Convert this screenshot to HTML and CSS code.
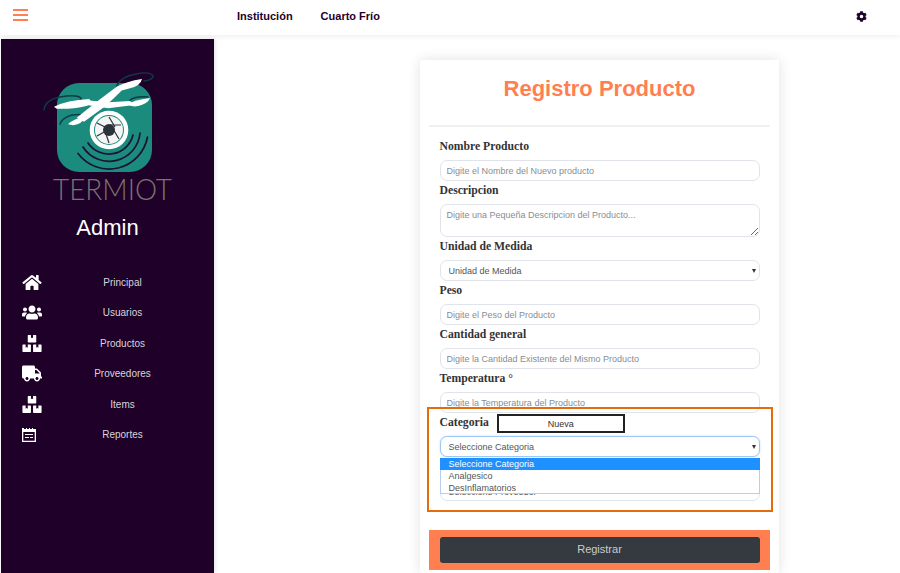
FILE: index.html
```html
<!DOCTYPE html>
<html lang="es">

<head>
    <meta charset="UTF-8">
    <meta name="viewport" content="width=device-width, initial-scale=1.0">
    <title>Registro Producto</title>
    <link rel="stylesheet" href="styles.css">
</head>

<body>
    <header class="topbar">
        <svg class="topbar-menu" viewBox="0 0 15 12">
            <path d="M0 1h15M0 6h15M0 11h15" />
        </svg>
        <nav class="topbar-links">
            <a href="#">Institución</a>
            <a href="#">Cuarto Frío</a>
        </nav>
        <svg class="topbar-cog" viewBox="0 0 512 512">
            <path d="M487.4 315.7l-42.6-24.6c4.3-23.2 4.3-47 0-70.2l42.6-24.6c4.9-2.8 7.1-8.6 5.5-14-11.1-35.6-30-67.8-54.7-94.6-3.8-4.1-10-5.1-14.8-2.3L380.8 110c-17.9-15.4-38.5-27.3-60.8-35.1V25.8c0-5.6-3.9-10.5-9.4-11.7-36.7-8.2-74.3-7.8-109.2 0-5.5 1.2-9.4 6.1-9.4 11.7V75c-22.2 7.9-42.8 19.8-60.8 35.1L88.7 85.5c-4.9-2.8-11-1.9-14.8 2.3-24.7 26.7-43.6 58.9-54.7 94.6-1.7 5.4.6 11.2 5.5 14L67.3 221c-4.3 23.2-4.3 47 0 70.2l-42.6 24.6c-4.9 2.8-7.1 8.6-5.5 14 11.1 35.6 30 67.8 54.7 94.6 3.8 4.1 10 5.1 14.8 2.3l42.6-24.6c17.9 15.4 38.5 27.3 60.8 35.1v49.2c0 5.6 3.9 10.5 9.4 11.7 36.7 8.2 74.3 7.8 109.2 0 5.5-1.2 9.4-6.1 9.4-11.7v-49.2c22.2-7.9 42.8-19.8 60.8-35.1l42.6 24.6c4.9 2.8 11 1.9 14.8-2.3 24.7-26.7 43.6-58.9 54.7-94.6 1.5-5.5-.7-11.3-5.6-14.1zM256 336c-44.1 0-80-35.9-80-80s35.9-80 80-80 80 35.9 80 80-35.9 80-80 80z" />
        </svg>
    </header>

    <div class="layout">
        <aside class="sidebar">
            <svg class="logo" viewBox="0 0 140 150">
                <rect x="17" y="18" width="95" height="89" rx="22" fill="#1b8b7e" />
                <!-- helices -->
                <g fill="none" stroke="#0f3a44" stroke-width="1.500" stroke-linecap="round">
                    <path d="M76 23Q79 12 96 9Q110 6 113 11Q113 15 104 16" />
                    <path d="M4 45Q5 35 20 32Q36 29 41 33Q41 36 36 37" />
                    <path d="M20 59Q22 53 32 50Q40 49 44 50" />
                    <path d="M90 35Q96 31 108 32" />
                </g>
                <g transform="scale(.3333)" fill="#fff">
                    <path d="M42 125Q80 106 148 102Q158 112 142 122Q90 134 50 131Z" />
                    <path d="M140 106L205 112L270 108L282 120L205 130L140 120Z" />
                    <path d="M262 118Q290 103 330 99Q324 116 295 123Q275 127 262 118Z" />
                    <path d="M226 68Q260 48 306 42Q302 62 270 70L248 76Z" />
                    <path d="M250 72L198 122L132 170L110 158L178 104L232 64Z" />
                    <path d="M84 178Q100 160 137 155Q126 177 100 181Z" />
                </g>
                <!-- lente -->
                <circle cx="69" cy="65" r="19.300" fill="#fff" />
                <circle cx="69" cy="65" r="15" fill="#1b8b7e" />
                <circle cx="69" cy="65" r="14" fill="#f4f4f4" />
                <path d="M69 52L75 62M81 60L70 60M79 74L73 64M69 78L65 66M57 71L66 66M57 58L65 62" stroke="#2a333c" stroke-width="1.200" />
                <circle cx="69" cy="65" r="6" fill="#2a333c" />
                <g fill="none" stroke="#1c1236" stroke-width="1.700" stroke-linecap="round">
                    <path d="M48 78A25 25 0 0 0 93 70" />
                    <path d="M43 82A31 31 0 0 0 100 68" />
                    <path d="M38 88.500A39 39 0 0 0 107.500 72" />
                </g>
                <text class="logo-text" x="13" y="135" textLength="119" lengthAdjust="spacingAndGlyphs">TERMIOT</text>
            </svg>
            <h2 class="sidebar-user">Admin</h2>
            <ul class="sidebar-nav">
                <li>
                    <svg viewBox="0 0 576 512"><path d="M280.37 148.26L96 300.11V464a16 16 0 0 0 16 16l112.06-.29a16 16 0 0 0 15.92-16V368a16 16 0 0 1 16-16h64a16 16 0 0 1 16 16v95.64a16 16 0 0 0 16 16.05L464 480a16 16 0 0 0 16-16V300L295.67 148.26a12.19 12.19 0 0 0-15.3 0zM571.6 251.47L488 182.56V44.05a12 12 0 0 0-12-12h-56a12 12 0 0 0-12 12v72.61L318.47 43a48 48 0 0 0-61 0L4.34 251.47a12 12 0 0 0-1.6 16.9l25.5 31A12 12 0 0 0 45.15 301l235.22-193.74a12.19 12.19 0 0 1 15.3 0L530.9 301a12 12 0 0 0 16.9-1.6l25.5-31a12 12 0 0 0-1.7-16.93z" /></svg>
                    <a href="#">Principal</a>
                </li>
                <li>
                    <svg viewBox="0 0 640 512"><path d="M96 224c35.3 0 64-28.7 64-64s-28.7-64-64-64-64 28.7-64 64 28.7 64 64 64zm448 0c35.3 0 64-28.7 64-64s-28.7-64-64-64-64 28.7-64 64 28.7 64 64 64zm32 32h-64c-17.6 0-33.5 7.1-45.1 18.6 40.3 22.1 68.9 62 75.1 109.4h66c17.7 0 32-14.3 32-32v-32c0-35.3-28.7-64-64-64zm-256 0c61.9 0 112-50.1 112-112S381.9 32 320 32 208 82.1 208 144s50.1 112 112 112zm76.8 32h-8.3c-20.8 10-43.9 16-68.5 16s-47.6-6-68.5-16h-8.3C179.6 288 128 339.6 128 403.2V432c0 26.5 21.5 48 48 48h288c26.5 0 48-21.5 48-48v-28.8c0-63.6-51.6-115.2-115.2-115.2zm-223.7-13.4C161.5 263.1 145.6 256 128 256H64c-35.3 0-64 28.7-64 64v32c0 17.7 14.3 32 32 32h65.9c6.3-47.4 34.9-87.3 75.2-109.4z" /></svg>
                    <a href="#">Usuarios</a>
                </li>
                <li>
                    <svg viewBox="0 0 576 512"><path d="M560 288h-80v96l-32-21.3-32 21.3v-96h-80c-8.8 0-16 7.2-16 16v192c0 8.8 7.2 16 16 16h224c8.8 0 16-7.2 16-16V304c0-8.8-7.2-16-16-16zm-384-64h224c8.8 0 16-7.2 16-16V16c0-8.8-7.2-16-16-16h-80v96l-32-21.3L256 96V0h-80c-8.8 0-16 7.2-16 16v192c0 8.8 7.2 16 16 16zm64 64h-80v96l-32-21.3L96 384v-96H16c-8.8 0-16 7.2-16 16v192c0 8.8 7.2 16 16 16h224c8.8 0 16-7.2 16-16V304c0-8.8-7.2-16-16-16z" /></svg>
                    <a href="#">Productos</a>
                </li>
                <li>
                    <svg viewBox="0 0 640 512"><path d="M624 352h-16V243.900c0-12.700-5.100-24.900-14.100-33.900L494 110.100c-9-9-21.200-14.100-33.900-14.100H416V48c0-26.500-21.500-48-48-48H48C21.500 0 0 21.500 0 48v320c0 26.500 21.500 48 48 48h16c0 53 43 96 96 96s96-43 96-96h128c0 53 43 96 96 96s96-43 96-96h48c8.800 0 16-7.200 16-16v-32c0-8.800-7.200-16-16-16zM160 464c-26.500 0-48-21.500-48-48s21.500-48 48-48 48 21.500 48 48-21.500 48-48 48zm320 0c-26.500 0-48-21.500-48-48s21.500-48 48-48 48 21.500 48 48-21.500 48-48 48zm80-208H416V144h44.100l99.900 99.900V256z" /></svg>
                    <a href="#">Proveedores</a>
                </li>
                <li>
                    <svg viewBox="0 0 576 512"><path d="M560 288h-80v96l-32-21.3-32 21.3v-96h-80c-8.8 0-16 7.2-16 16v192c0 8.8 7.2 16 16 16h224c8.8 0 16-7.2 16-16V304c0-8.8-7.2-16-16-16zm-384-64h224c8.8 0 16-7.2 16-16V16c0-8.8-7.2-16-16-16h-80v96l-32-21.3L256 96V0h-80c-8.8 0-16 7.2-16 16v192c0 8.8 7.2 16 16 16zm64 64h-80v96l-32-21.3L96 384v-96H16c-8.8 0-16 7.2-16 16v192c0 8.8 7.2 16 16 16h224c8.8 0 16-7.2 16-16V304c0-8.8-7.2-16-16-16z" /></svg>
                    <a href="#">Items</a>
                </li>
                <li>
                    <svg class="nav-report" viewBox="0 0 14 14" preserveAspectRatio="xMinYMid"><path fill-rule="evenodd" d="M0 0h2v1h2V0h1v1h2V0h1v1h2V0h1v1h3v13H0zM1.300 4v8.700h11.400V4zM3 6h8v1H3zM8 9h3v1H8zM3 9h4v1H3z" /></svg>
                    <a href="#">Reportes</a>
                </li>
            </ul>
        </aside>

        <main class="main">
            <section class="card">
                <h1 class="card-title">Registro Producto</h1>
                <form class="form">
                    <label class="form-label">Nombre Producto</label>
                    <input class="form-input" type="text" placeholder="Digite el Nombre del Nuevo producto">
                    <label class="form-label">Descripcion</label>
                    <textarea class="form-input form-area" placeholder="Digite una Pequeña Descripcion del Producto..."></textarea>
                    <label class="form-label">Unidad de Medida</label>
                    <div class="select-wrap">
                        <select class="form-input form-select">
                            <option>Unidad de Medida</option>
                        </select>
                    </div>
                    <label class="form-label">Peso</label>
                    <input class="form-input" type="text" placeholder="Digite el Peso del Producto">
                    <label class="form-label">Cantidad general</label>
                    <input class="form-input" type="text" placeholder="Digite la Cantidad Existente del Mismo Producto">
                    <label class="form-label">Temperatura °</label>
                    <input class="form-input" type="text" placeholder="Digite la Temperatura del Producto">
                    <div class="form-label form-label-row">
                        <label>Categoria</label>
                        <button class="btn-new" type="button">Nueva</button>
                    </div>
                    <div class="select-wrap">
                        <select class="form-input form-select is-focus">
                            <option>Seleccione Categoria</option>
                        </select>
                        <ul class="select-list">
                            <li class="current">Seleccione Categoria</li>
                            <li>Analgesico</li>
                            <li>DesInflamatorios</li>
                        </ul>
                    </div>
                    <div class="form-label"></div>
                    <select class="form-input form-select form-select-low">
                        <option>Seleccione Proveedor</option>
                    </select>
                    <div class="form-submit">
                        <button class="btn-submit" type="button">Registrar</button>
                    </div>
                </form>
                <div class="mark"></div>
            </section>
        </main>
    </div>
</body>

</html>
```

FILE: styles.css
```css
* {
    margin: 0;
    padding: 0;
    box-sizing: border-box;
}

html,
body {
    height: 573px;
    overflow: hidden;
}

body {
    background-color: #fff;
    font-family: "Liberation Sans", Arial, sans-serif;
}

ul {
    list-style: none;
}

a {
    color: inherit;
    text-decoration: none;
}

/* barra superior */
.topbar {
    height: 35px;
    display: flex;
    align-items: flex-start;
    background-color: #fff;
    box-shadow: 0 1px 6px rgba(0, 0, 0, 0.08);
}

.topbar-menu {
    width: 15px;
    height: 12px;
    margin: 9px 0 0 13px;
    fill: none;
    stroke: #ff7f50;
    stroke-width: 2;
}

.topbar-links {
    display: flex;
    gap: 28px;
    margin: 9px 0 0 209px;
    font-size: 11px;
    font-weight: bold;
    line-height: 14px;
    color: #1e0029;
}

.topbar-cog {
    width: 11px;
    height: 11px;
    margin: 11px 33px 0 auto;
    fill: #1e0029;
}

.layout {
    display: flex;
    align-items: flex-start;
}

/* menu lateral */
.sidebar {
    width: 213px;
    height: 534px;
    margin: 4px 0 0 1px;
    padding-top: 26px;
    flex-shrink: 0;
    background-color: #1e0029;
    box-shadow: 1px 0 4px rgba(0, 0, 0, 0.12);
}

.logo {
    display: block;
    width: 140px;
    height: 150px;
    margin-left: 39px;
}

.logo-text {
    font-family: "Lato", sans-serif;
    font-size: 30px;
    font-weight: 300;
    fill: #7a736e;
}

.sidebar-user {
    font-size: 22px;
    font-weight: normal;
    line-height: 26px;
    text-align: center;
    color: #fff;
}

.sidebar-nav {
    margin-top: 26px;
}

.sidebar-nav li {
    height: 30.500px;
    display: flex;
    align-items: center;
    font-size: 10px;
    color: #d8d5da;
}

.sidebar-nav svg {
    width: 20px;
    height: 17px;
    margin-left: 21px;
    flex-shrink: 0;
    fill: #fff;
}

.sidebar-nav .nav-report {
    height: 14px;
}

.sidebar-nav a {
    flex: 1;
    margin-right: 11px;
    text-align: center;
}

/* formulario */
.main {
    flex: 1;
    padding: 25px 0 0 206px;
}

.card {
    width: 359px;
    height: 513px;
    position: relative;
    padding: 0 9px;
    background-color: #fff;
    box-shadow: 0 0 12px rgba(0, 0, 0, 0.12);
}

.card-title {
    height: 67px;
    padding-top: 14px;
    border-bottom: 2px solid #eef0f2;
    font-size: 22px;
    line-height: 30px;
    text-align: center;
    color: #ff7f50;
}

.form {
    display: flex;
    flex-direction: column;
    padding: 10px 10.500px 0;
}

.form-label {
    height: 23px;
    font-family: "Liberation Serif", serif;
    font-size: 11.700px;
    font-weight: bold;
    line-height: 20px;
    color: #333;
}

.form-label-row {
    display: flex;
    gap: 8px;
}

.form-input {
    width: 100%;
    height: 21px;
    flex-shrink: 0;
    padding: 0 6px;
    border: 1.500px solid #e0e4ea;
    border-radius: 7px;
    background-color: #fff;
    font-family: "Liberation Sans", Arial, sans-serif;
    font-size: 9px;
    color: #555;
    outline: none;
}

.form-input::placeholder {
    color: #868e96;
    opacity: 1;
}

.form-area {
    height: 33px;
    padding-top: 4px;
    line-height: 12px;
}

.form-select {
    display: block;
    padding-left: 8px;
    appearance: none;
}

.form-select-low {
    padding-top: 2px;
}

.is-focus {
    border-color: #9fc9f5;
    box-shadow: 0 0 2px rgba(128, 189, 255, 0.6);
}

.select-wrap {
    position: relative;
}

.select-wrap::after {
    content: "";
    position: absolute;
    top: 9px;
    right: 4px;
    border-left: 2.500px solid transparent;
    border-right: 2.500px solid transparent;
    border-top: 4px solid #333;
}

.btn-new {
    width: 128px;
    height: 19px;
    margin-top: 1px;
    background-color: #fff;
    border: 2px solid #222;
    font-family: "Liberation Sans", Arial, sans-serif;
    font-size: 9px;
    color: #333;
}

.select-list {
    position: absolute;
    top: 21.500px;
    left: 0;
    width: 100%;
    height: 36px;
    background-color: #fff;
    border: 1px solid #b9cdf0;
    border-top: 0;
    font-size: 9px;
    line-height: 12px;
    color: #555;
}

.select-list li {
    padding-left: 8px;
}

.select-list .current {
    margin: 0 -1px;
    padding-left: 9px;
    background-color: #1e90ff;
    color: #fff;
}

.form-submit {
    margin: 29px -10.500px 0;
    padding: 7px 10.500px;
    background-color: #ff7f50;
}

.btn-submit {
    display: block;
    width: 100%;
    height: 26px;
    padding-bottom: 2px;
    border: 0;
    border-radius: 3px;
    background-color: #343a40;
    font-family: "Liberation Sans", Arial, sans-serif;
    font-size: 11px;
    color: #ccc;
}

/* recuadro de la captura */
.mark {
    position: absolute;
    top: 347px;
    left: 7px;
    width: 346px;
    height: 105px;
    border: 2px solid #e46c0a;
}
```
